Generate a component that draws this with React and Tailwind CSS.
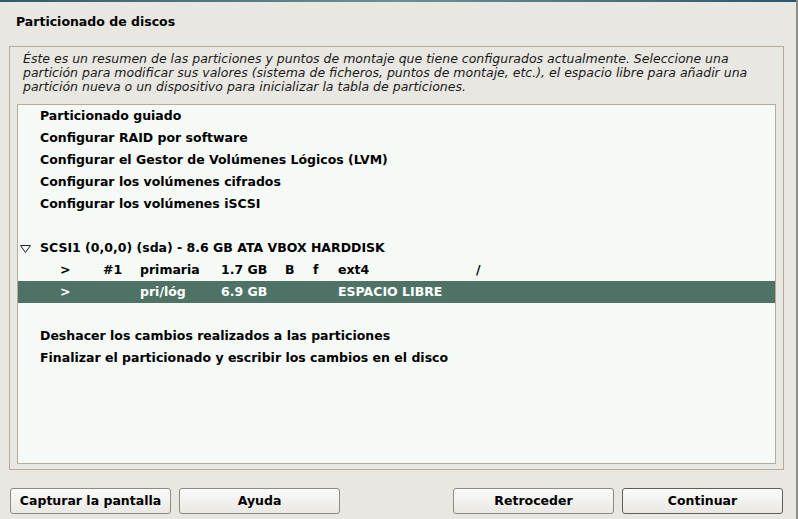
import React from "react";

const menuTop = [
  "Particionado guiado",
  "Configurar RAID por software",
  "Configurar el Gestor de Volúmenes Lógicos (LVM)",
  "Configurar los volúmenes cifrados",
  "Configurar los volúmenes iSCSI",
];

const menuBottom = [
  "Deshacer los cambios realizados a las particiones",
  "Finalizar el particionado y escribir los cambios en el disco",
];

function Row({ children, selected }) {
  return (
    <div
      className={
        "h-[22px] pt-[1px] flex items-center whitespace-nowrap " +
        (selected ? "bg-[#4e7366] text-white" : "text-black")
      }
    >
      {children}
    </div>
  );
}

function PartRow({ num, type, size, b, f, fs, mount, selected }) {
  return (
    <Row selected={selected}>
      <span className="w-[42px] shrink-0" />
      <span className="w-[43px] shrink-0">&gt;</span>
      <span className="w-[37px] shrink-0">{num}</span>
      <span className="w-[81px] shrink-0">{type}</span>
      <span className="w-[64px] shrink-0">{size}</span>
      <span className="w-[28px] shrink-0">{b}</span>
      <span className="w-[25px] shrink-0">{f}</span>
      <span className="w-[138px] shrink-0">{fs}</span>
      <span>{mount}</span>
    </Row>
  );
}

function Button({ children, primary }) {
  return (
    <button
      className={
        "w-[161px] h-[26px] rounded-[3px] border bg-gradient-to-b from-[#fbfbfa] to-[#e9e8e3] text-[12.5px] font-bold text-black " +
        (primary ? "border-[#5f5e5a]" : "border-[#8f8b82]")
      }
    >
      {children}
    </button>
  );
}

export default function App() {
  return (
    <div
      className="w-[798px] h-[519px] bg-[#e8e7e1] flex flex-col border-r-2 border-[#8d8d8a]"
      style={{ fontFamily: '"DejaVu Sans", sans-serif' }}
    >
      <div className="h-[2px] bg-gradient-to-r from-[#2f5b6e] via-[#6e9096] to-[#2a5670]" />
      <div className="h-[44px] flex items-center pl-[16px] pb-[4px] text-[12.5px] font-bold text-black">
        Particionado de discos
      </div>

      <div className="ml-[9px] mr-[12px] h-[424px] border border-[#b8ab98] flex flex-col px-[7px] pt-[5px] pb-[5px]">
        <p className="italic text-[12.5px] leading-[14px] text-[#1a1a1a] pl-[6px] whitespace-nowrap">
          Éste es un resumen de las particiones y puntos de montaje que tiene configurados actualmente. Seleccione una
          <br />
          partición para modificar sus valores (sistema de ficheros, puntos de montaje, etc.), el espacio libre para añadir una
          <br />
          partición nueva o un dispositivo para inicializar la tabla de particiones.
        </p>

        <div className="mt-[10px] flex-1 border border-[#b8ab98] bg-[#f6faf6] text-[12.5px] font-bold">
          {menuTop.map((t) => (
            <Row key={t}>
              <span className="pl-[22px]">{t}</span>
            </Row>
          ))}
          <Row />
          <Row>
            <span className="ml-[2px] w-[20px] flex items-center shrink-0">
              <svg width="11" height="8" viewBox="0 0 11 8">
                <path d="M0.5 0.5 H10.5 L5.5 7.5 Z" fill="none" stroke="#222" strokeWidth="1" />
              </svg>
            </span>
            <span>SCSI1 (0,0,0) (sda) - 8.6 GB ATA VBOX HARDDISK</span>
          </Row>
          <PartRow num="#1" type="primaria" size="1.7 GB" b="B" f="f" fs="ext4" mount="/" />
          <PartRow type="pri/lóg" size="6.9 GB" fs="ESPACIO LIBRE" selected />
          <Row />
          {menuBottom.map((t) => (
            <Row key={t}>
              <span className="pl-[22px]">{t}</span>
            </Row>
          ))}
        </div>
      </div>

      <div className="flex pl-[10px] pr-[13px] mt-[18px]">
        <div className="flex gap-[8px]">
          <Button>Capturar la pantalla</Button>
          <Button>Ayuda</Button>
        </div>
        <div className="ml-auto flex gap-[8px]">
          <Button>Retroceder</Button>
          <Button primary>Continuar</Button>
        </div>
      </div>
    </div>
  );
}
